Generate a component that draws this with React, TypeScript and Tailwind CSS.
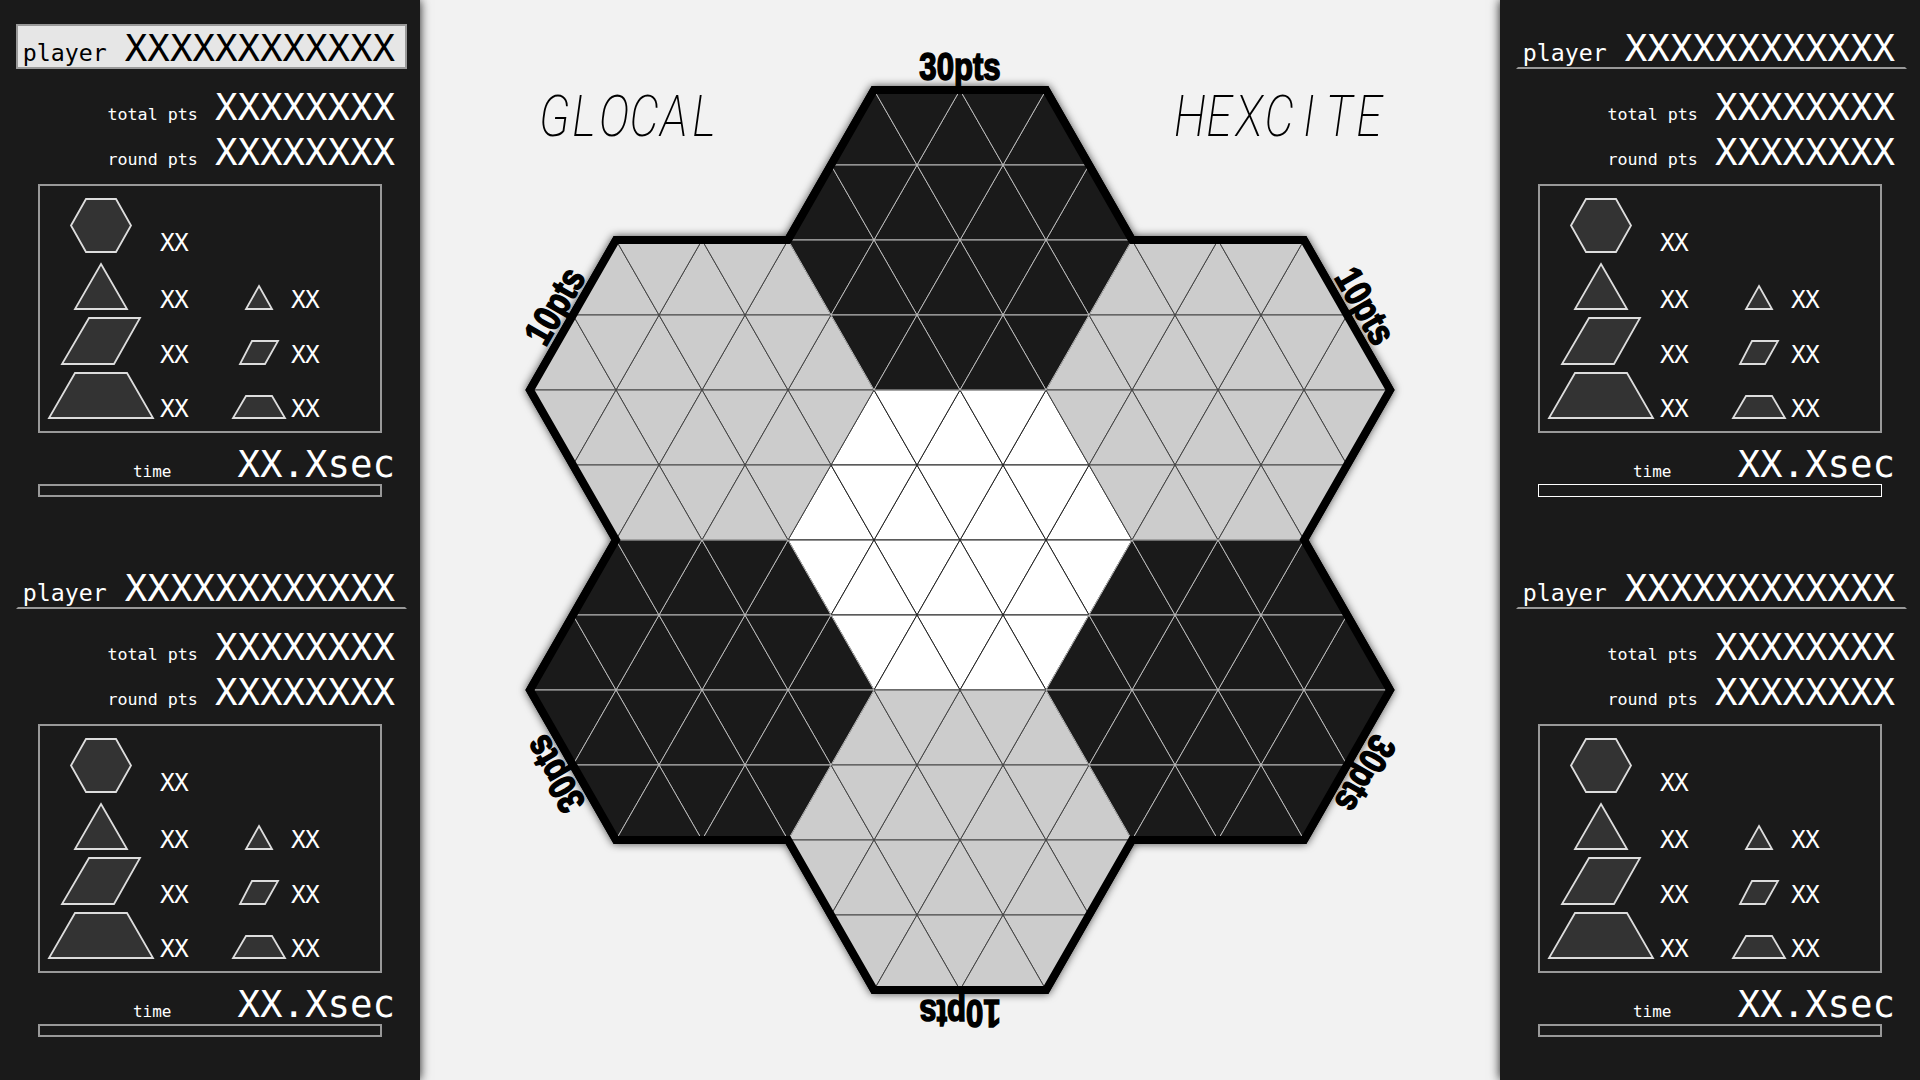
const SIDE = 86;
const ROW = 75;
const CX = 960;
const CY = 540;

type Pt = [number, number];

// outer edge of the seven hexagons, in grid units from the board centre
const OUTLINE: Pt[] = (
  [
    [-1, -6], [1, -6], [2, -4], [4, -4], [5, -2], [4, 0], [5, 2], [4, 4], [2, 4],
    [1, 6], [-1, 6], [-2, 4], [-4, 4], [-5, 2], [-4, 0], [-5, -2], [-4, -4], [-2, -4],
  ] as Pt[]
).map(([x, y]) => [CX + x * SIDE, CY + y * ROW]);

const HEXES = [
  { x: CX, y: CY, fill: "#ffffff", line: "#222222" },
  { x: CX - 3 * SIDE, y: 390, fill: "#cccccc", line: "#444444" },
  { x: CX + 3 * SIDE, y: 390, fill: "#cccccc", line: "#444444" },
  { x: CX, y: 840, fill: "#cccccc", line: "#444444" },
  { x: CX, y: 240, fill: "#1a1a1a", line: "#bbbbbb" },
  { x: CX - 3 * SIDE, y: 690, fill: "#1a1a1a", line: "#bbbbbb" },
  { x: CX + 3 * SIDE, y: 690, fill: "#1a1a1a", line: "#bbbbbb" },
];

const LABELS = [
  { text: "30pts", angle: 0, y: 80 },
  { text: "10pts", angle: 60, y: 85 },
  { text: "30pts", angle: 120, y: 85 },
  { text: "10pts", angle: 180, y: 80 },
  { text: "30pts", angle: 240, y: 85 },
  { text: "10pts", angle: 300, y: 85 },
];

const pts = (list: Pt[]) => list.map((p) => p.join(",")).join(" ");

// triangles of one hexagon with a side of two cells
function hexTriangles(cx: number, cy: number) {
  const out: Pt[][] = [];
  const rowPts = (n: number, y: number) =>
    Array.from({ length: n + 1 }, (_, i): Pt => [cx - (n * SIDE) / 2 + i * SIDE, y]);
  for (let k = -2; k < 2; k++) {
    const n0 = 4 - Math.abs(k);
    const n1 = 4 - Math.abs(k + 1);
    const t = rowPts(n0, cy + k * ROW);
    const b = rowPts(n1, cy + (k + 1) * ROW);
    if (n1 > n0) {
      for (let i = 0; i < n1; i++) out.push([b[i], b[i + 1], t[i]]);
      for (let i = 0; i < n0; i++) out.push([t[i], t[i + 1], b[i + 1]]);
    } else {
      for (let i = 0; i < n0; i++) out.push([t[i], t[i + 1], b[i]]);
      for (let i = 0; i < n1; i++) out.push([b[i], b[i + 1], t[i + 1]]);
    }
  }
  return out;
}

function Board() {
  return (
    <svg viewBox="420 0 1080 1080" className="block h-full w-full">
      <polygon
        points={pts(OUTLINE)}
        fill="#000"
        stroke="#000"
        strokeWidth={8}
        className="drop-shadow-[0_0_4px_rgba(0,0,0,0.7)]"
      />
      {HEXES.map((hex) =>
        hexTriangles(hex.x, hex.y).map((tri, i) => (
          <polygon key={`${hex.x}-${hex.y}-${i}`} points={pts(tri)} fill={hex.fill} stroke={hex.line} strokeWidth={1} />
        ))
      )}
      <polygon points={pts(OUTLINE)} fill="none" stroke="#000" strokeWidth={8} strokeLinejoin="miter" strokeMiterlimit={4} />
      {LABELS.map((label) => (
        <text
          key={label.angle}
          transform={`rotate(${label.angle} ${CX} ${CY}) translate(${CX} ${label.y}) scale(0.82 1)`}
          textAnchor="middle"
          fill="#000"
          stroke="#000"
          strokeWidth={1.6}
          className="font-['Liberation_Sans',sans-serif] text-[38px] font-bold"
        >
          {label.text}
        </text>
      ))}
    </svg>
  );
}

function Shape({ points, x, y, w, h }: { points: Pt[]; x: number; y: number; w: number; h: number }) {
  return (
    <svg viewBox={`${x} ${y} ${w} ${h}`} width={w} height={h} className="block shrink-0">
      <polygon points={pts(points)} fill="#333333" stroke="#dddddd" strokeWidth={1.8} />
    </svg>
  );
}

function Count() {
  return <span className="block text-[24.5px] leading-[21px] tracking-[-0.75px] text-white">XX</span>;
}

function Inventory() {
  return (
    <div className="ml-[22px] h-[249px] w-[344px] border-2 border-[#999999] pt-[11px]">
      <div className="flex h-[56px] items-end">
        <Shape x={40} y={197} w={118} h={56} points={[[71, 225.5], [86, 199], [116, 199], [131, 225.5], [116, 252], [86, 252]]} />
        <div className="ml-[2px]"><Count /></div>
      </div>
      <div className="flex h-[57px] items-end">
        <Shape x={40} y={253} w={118} h={57} points={[[101, 264], [127, 309], [75, 309]]} />
        <div className="ml-[2px] w-[71px]"><Count /></div>
        <Shape x={231} y={253} w={58} h={57} points={[[259, 286], [272, 309], [246, 309]]} />
        <div className="ml-[2px]"><Count /></div>
      </div>
      <div className="flex h-[55px] items-end">
        <Shape x={40} y={310} w={118} h={55} points={[[89, 318], [140, 318], [114, 364], [62, 364]]} />
        <div className="ml-[2px] w-[71px]"><Count /></div>
        <Shape x={231} y={310} w={58} h={55} points={[[252, 341], [278, 341], [265, 364], [240, 364]]} />
        <div className="ml-[2px]"><Count /></div>
      </div>
      <div className="flex h-[54px] items-end">
        <Shape x={40} y={365} w={118} h={54} points={[[75, 373], [127, 373], [153, 418], [49, 418]]} />
        <div className="ml-[2px] w-[71px]"><Count /></div>
        <Shape x={231} y={365} w={58} h={54} points={[[246, 396], [272, 396], [285, 418], [233, 418]]} />
        <div className="ml-[2px]"><Count /></div>
      </div>
    </div>
  );
}

function StatRow({ label, value }: { label: string; value: string }) {
  return (
    <div className="flex h-[45px] items-baseline justify-end gap-[17px] pr-[12px] leading-[45px] text-white">
      <span className="text-[16.7px]">{label}</span>
      <span className="text-[37.4px]">{value}</span>
    </div>
  );
}

function PlayerCard({ active = false, thinBar = false }: { active?: boolean; thinBar?: boolean }) {
  return (
    <div className="h-[540px] pl-[16px] pr-[13px] pt-[24px]">
      <div
        className={
          active
            ? "mb-[16px] flex h-[45px] items-baseline justify-end gap-[18px] border-2 border-[#999999] bg-[#e6e6e6] pr-[10px] pt-[4px] leading-[37px] text-black"
            : "mb-[16px] flex h-[45px] items-baseline justify-end gap-[18px] border-2 border-transparent border-b-[#999999] pr-[10px] pt-[4px] leading-[37px] text-white"
        }
      >
        <span className="text-[23.25px]">player</span>
        <span className="text-[37.4px]">XXXXXXXXXXXX</span>
      </div>
      <StatRow label="total pts" value="XXXXXXXX" />
      <StatRow label="round pts" value="XXXXXXXX" />
      <div className="mt-[9px]">
        <Inventory />
      </div>
      <div className="mt-[9px] flex h-[42px] items-baseline justify-end gap-[66px] pr-[12px] leading-[45px] text-white">
        <span className="text-[16px]">time</span>
        <span className="text-[37.4px]">XX.Xsec</span>
      </div>
      <div className={thinBar ? "ml-[22px] h-[13px] w-[344px] border border-white" : "ml-[22px] h-[13px] w-[344px] border-2 border-[#999999]"} />
    </div>
  );
}

// letters sit on a fixed pitch, the title face is monospaced in the picture
function Title({ text, className }: { text: string; className: string }) {
  return (
    <h1
      className={`absolute top-[81px] flex origin-left scale-x-[0.8] font-['Roboto',sans-serif] text-[58px] font-extralight italic leading-[70px] text-black ${className}`}
    >
      {text.split("").map((ch, i) => (
        <span key={i} className="block w-[37.5px] text-center">
          {ch}
        </span>
      ))}
    </h1>
  );
}

export default function App() {
  return (
    <div className="flex h-[1080px] w-[1920px] overflow-hidden bg-[#f2f2f2] font-['DejaVu_Sans_Mono',monospace]">
      <aside className="relative z-10 w-[420px] shrink-0 bg-[#1a1a1a] shadow-[0_0_10px_rgba(0,0,0,0.9)]">
        <PlayerCard active />
        <PlayerCard />
      </aside>
      <main className="relative h-full w-[1080px] shrink-0">
        <Board />
        <Title text="GLOCAL" className="left-[119px]" />
        <Title text="HEXCITE" className="left-[754px]" />
      </main>
      <aside className="relative z-10 w-[420px] shrink-0 bg-[#1a1a1a] shadow-[0_0_10px_rgba(0,0,0,0.9)]">
        <PlayerCard thinBar />
        <PlayerCard />
      </aside>
    </div>
  );
}
